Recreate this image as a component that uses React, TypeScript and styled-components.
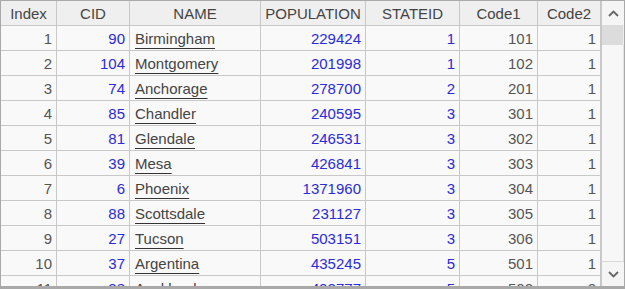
import React from 'react'
import styled, { createGlobalStyle } from 'styled-components'

type City = {
  index: number
  cid: number
  name: string
  population: number
  stateId: number
  code1: number
  code2: number
}

const cities: City[] = [
  { index: 1, cid: 90, name: 'Birmingham', population: 229424, stateId: 1, code1: 101, code2: 1 },
  { index: 2, cid: 104, name: 'Montgomery', population: 201998, stateId: 1, code1: 102, code2: 1 },
  { index: 3, cid: 74, name: 'Anchorage', population: 278700, stateId: 2, code1: 201, code2: 1 },
  { index: 4, cid: 85, name: 'Chandler', population: 240595, stateId: 3, code1: 301, code2: 1 },
  { index: 5, cid: 81, name: 'Glendale', population: 246531, stateId: 3, code1: 302, code2: 1 },
  { index: 6, cid: 39, name: 'Mesa', population: 426841, stateId: 3, code1: 303, code2: 1 },
  { index: 7, cid: 6, name: 'Phoenix', population: 1371960, stateId: 3, code1: 304, code2: 1 },
  { index: 8, cid: 88, name: 'Scottsdale', population: 231127, stateId: 3, code1: 305, code2: 1 },
  { index: 9, cid: 27, name: 'Tucson', population: 503151, stateId: 3, code1: 306, code2: 1 },
  { index: 10, cid: 37, name: 'Argentina', population: 435245, stateId: 5, code1: 501, code2: 1 },
  { index: 11, cid: 38, name: 'Auckland', population: 492777, stateId: 5, code1: 502, code2: 2 }
]

const columns = ['Index', 'CID', 'NAME', 'POPULATION', 'STATEID', 'Code1', 'Code2']

const GlobalStyle = createGlobalStyle`
  html, body {
    margin: 0;
    padding: 0;
    background: #ffffff;
  }
`

const Frame = styled.div`
  width: 625px;
  height: 289px;
  box-sizing: border-box;
  border: 1px solid #a9a9a9;
  border-bottom: 3px solid #a9a9a9;
  display: flex;
  overflow: hidden;
  font-family: 'Liberation Sans', Arial, sans-serif;
  font-size: 15px;
  background: #f9f9f9;
`

const TableArea = styled.div`
  flex: 1;
  overflow: hidden;
`

const Grid = styled.div`
  display: grid;
  grid-template-columns: 56px 73px 131px 105px 94px 78px 63px;
  grid-auto-rows: 25px;
`

const HeaderCell = styled.div`
  display: flex;
  align-items: center;
  justify-content: center;
  background: #efefef;
  color: #444;
  border-right: 1px solid #c8c8c8;
  border-bottom: 1px solid #c8c8c8;
`

const Cell = styled.div<{ $align?: 'left' | 'right'; $tone?: 'blue' | 'gray' }>`
  display: flex;
  align-items: center;
  justify-content: ${(p) => (p.$align === 'left' ? 'flex-start' : 'flex-end')};
  padding: ${(p) => (p.$align === 'left' ? '0 0 0 5px' : '0 4px 0 0')};
  color: ${(p) => (p.$tone === 'blue' ? '#2b2bd8' : '#555')};
  border-right: 1px solid #c8c8c8;
  border-bottom: 1px solid #c8c8c8;
  white-space: nowrap;
  overflow: hidden;
`

const CityLink = styled.span`
  color: #444;
  text-decoration: underline;
  text-decoration-color: #333;
  text-underline-offset: 4px;
`

const Scrollbar = styled.div`
  width: 22px;
  border-left: 1px solid #c8c8c8;
  display: flex;
  flex-direction: column;
  background: #f7f7f7;
`

const ArrowButton = styled.div`
  height: 24px;
  display: flex;
  align-items: center;
  justify-content: center;
  background: #f5f5f5;
`

const Thumb = styled.div`
  height: 20px;
  background: #dcdcdc;
  border-right: 1px solid #eeeeee;
`

const Track = styled.div`
  flex: 1;
  border-bottom: 1px solid #d8d8d8;
  border-right: 1px solid #e2e2e2;
`

const Chevron: React.FC<{ up?: boolean }> = ({ up }) => (
  <svg width="11" height="7" viewBox="0 0 11 7">
    <path
      d={up ? 'M1 6 L5.5 1.5 L10 6' : 'M1 1 L5.5 5.5 L10 1'}
      fill="none"
      stroke="#666"
      strokeWidth="1.8"
    />
  </svg>
)

const App: React.FC = () => {
  return (
    <>
      <GlobalStyle />
      <Frame>
        <TableArea>
          <Grid>
            {columns.map((c) => (
              <HeaderCell key={c}>{c}</HeaderCell>
            ))}
            {cities.map((city) => (
              <React.Fragment key={city.index}>
                <Cell>{city.index}</Cell>
                <Cell $tone="blue">{city.cid}</Cell>
                <Cell $align="left">
                  <CityLink>{city.name}</CityLink>
                </Cell>
                <Cell $tone="blue">{city.population}</Cell>
                <Cell $tone="blue">{city.stateId}</Cell>
                <Cell>{city.code1}</Cell>
                <Cell>{city.code2}</Cell>
              </React.Fragment>
            ))}
          </Grid>
        </TableArea>
        <Scrollbar>
          <ArrowButton>
            <Chevron up />
          </ArrowButton>
          <Thumb />
          <Track />
          <ArrowButton>
            <Chevron />
          </ArrowButton>
        </Scrollbar>
      </Frame>
    </>
  )
}

export default App
